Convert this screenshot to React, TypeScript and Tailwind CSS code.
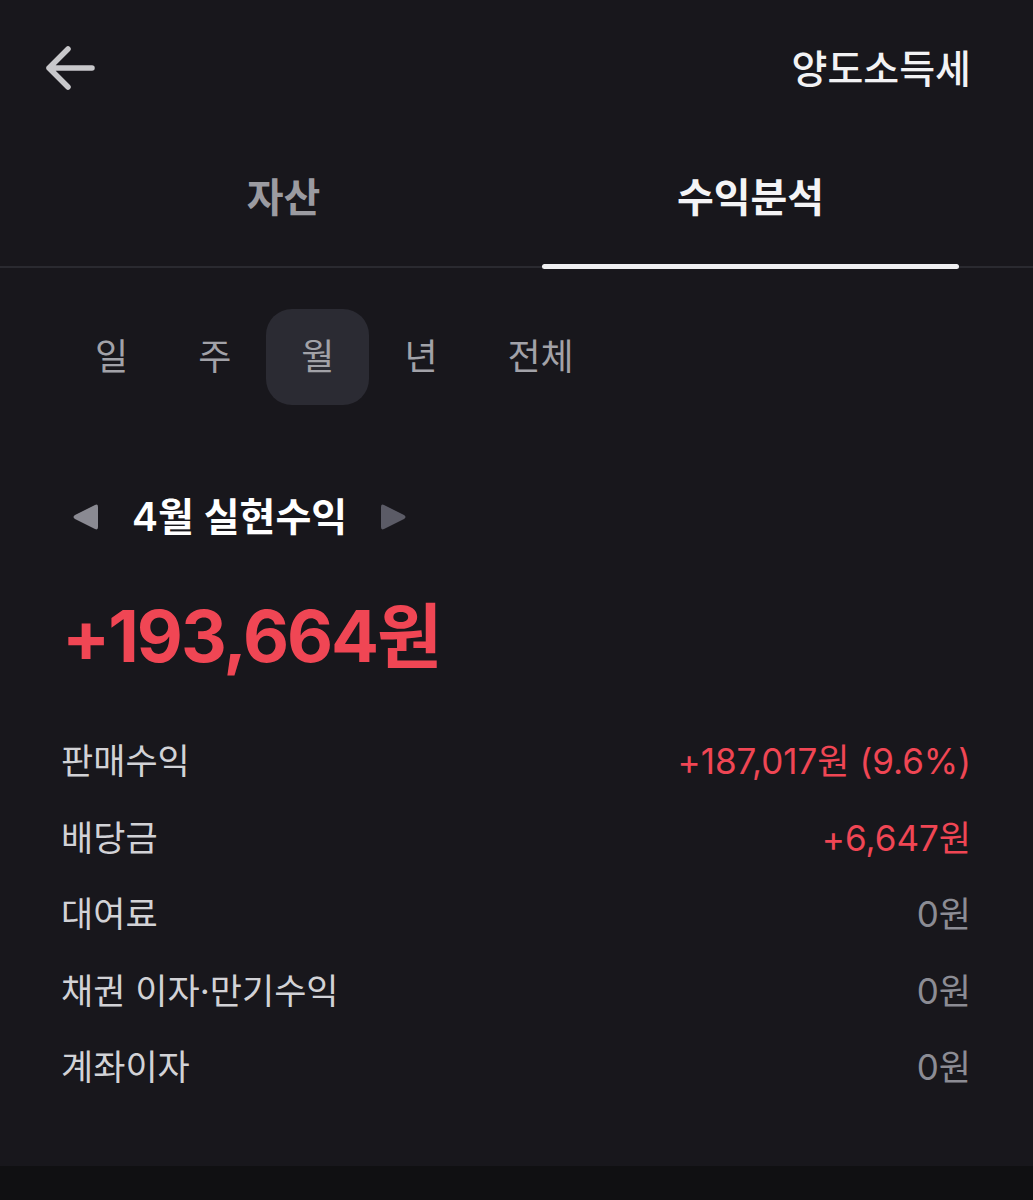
const FONT = { fontFamily: '"Inter", "Noto Sans CJK KR", sans-serif' }

const periods = ["일", "주", "월", "년", "전체"]

const rows: { label: string; value: string; positive: boolean }[] = [
  { label: "판매수익", value: "+187,017원 (9.6%)", positive: true },
  { label: "배당금", value: "+6,647원", positive: true },
  { label: "대여료", value: "0원", positive: false },
  { label: "채권 이자·만기수익", value: "0원", positive: false },
  { label: "계좌이자", value: "0원", positive: false },
]

function BackArrow() {
  return (
    <svg width="50" height="46" viewBox="0 0 50 46" fill="none">
      <path
        d="M22 3 L3 22 L22 41 M3 22 H46"
        stroke="#c8c8cb"
        strokeWidth="5.5"
        strokeLinecap="round"
        strokeLinejoin="round"
      />
    </svg>
  )
}

function Triangle({ dir, color }: { dir: "left" | "right"; color: string }) {
  const d = dir === "left" ? "M24 3 Q27 1.5 27 5 L27 25 Q27 28.5 24 27 L4 17 Q1 15 4 13 Z" : "M3 3 Q0 1.5 0 5 L0 25 Q0 28.5 3 27 L23 17 Q26 15 23 13 Z"
  return (
    <svg width="28" height="30" viewBox="0 0 28 30">
      <path d={d} fill={color} />
    </svg>
  )
}

export default function App() {
  return (
    <div className="w-[1033px] h-[1200px] bg-[#18171c] flex flex-col" style={FONT}>
      {/* header */}
      <div className="h-[138px] flex items-center justify-between pl-[46px] pr-[62px]">
        <BackArrow />
        <span className="text-[39px] font-medium text-[#f2f2f4]">양도소득세</span>
      </div>

      {/* tabs */}
      <div className="flex gap-[50px] pl-[75px] border-b-2 border-[#2a2a30]">
        <div className="w-[417px] flex flex-col">
          <div className="h-[126px] pb-[6px] flex items-center justify-center text-[40px] font-bold text-[#9b9ba1]">
            자산
          </div>
          <div className="h-[5px] -mb-[3px]" />
        </div>
        <div className="w-[417px] flex flex-col">
          <div className="h-[126px] pb-[6px] flex items-center justify-center text-[40px] font-bold text-[#f4f4f6]">
            수익분석
          </div>
          <div className="h-[5px] -mb-[3px] rounded-full bg-[#f0f0f2]" />
        </div>
      </div>

      {/* periods */}
      <div className="flex ml-[60px] mt-[41px]">
        {periods.map((p) => (
          <div
            key={p}
            className={
              p === "월"
                ? "h-[96px] px-[35px] flex items-center justify-center rounded-[26px] bg-[#2b2b33] text-[36px] text-[#a2a2a8]"
                : "h-[96px] px-[35px] flex items-center justify-center rounded-[26px] text-[36px] text-[#a2a2a8]"
            }
          >
            {p}
          </div>
        ))}
      </div>

      {/* month title */}
      <div className="flex items-center mt-[96px] ml-[71px] h-[32px]">
        <Triangle dir="left" color="#8a8a92" />
        <span className="ml-[33px] text-[39px] font-semibold text-white">4월 실현수익</span>
        <span className="ml-[34px]">
          <Triangle dir="right" color="#5b5b66" />
        </span>
      </div>

      {/* total */}
      <div className="mt-[61px] ml-[62px] h-[84px] flex items-center text-[71px] font-bold text-[#f04654] tracking-[-2px]">
        +193,664원
      </div>

      {/* rows */}
      <div className="mt-[45px] pl-[61px] pr-[62px] flex flex-col">
        {rows.map((r) => (
          <div key={r.label} className="h-[76.5px] flex items-center justify-between text-[35px]">
            <span className="text-[#d2d2d6]">{r.label}</span>
            <span className={r.positive ? "text-[#f04654]" : "text-[#8c8c94]"}>{r.value}</span>
          </div>
        ))}
      </div>

      <div className="flex-1" />
      <div className="h-[34px] bg-[#101012]" />
    </div>
  )
}
